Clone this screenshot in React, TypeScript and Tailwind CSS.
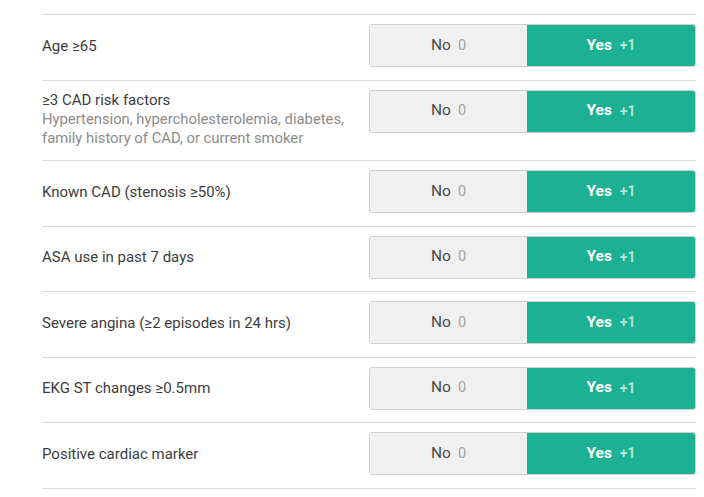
import React from 'react';

type Item = { label: string; sub?: string };

const items: Item[] = [
  { label: 'Age ≥65' },
  {
    label: '≥3 CAD risk factors',
    sub: 'Hypertension, hypercholesterolemia, diabetes, family history of CAD, or current smoker',
  },
  { label: 'Known CAD (stenosis ≥50%)' },
  { label: 'ASA use in past 7 days' },
  { label: 'Severe angina (≥2 episodes in 24 hrs)' },
  { label: 'EKG ST changes ≥0.5mm' },
  { label: 'Positive cardiac marker' },
];

function Toggle() {
  return (
    <div className="flex h-[43px] w-[327px] shrink-0 overflow-hidden rounded-[3px] border border-[#cfcfcf]">
      <button className="flex w-[157px] items-center justify-center gap-[7px] bg-[#f0f0f0] text-[15.5px] text-[#4a4a4a]">
        <span>No</span>
        <span className="text-[14.5px] text-[#a3a3a3]">0</span>
      </button>
      <button className="flex flex-1 items-center justify-center gap-[8px] bg-[#1bb192] text-[15.5px] font-bold text-white">
        <span>Yes</span>
        <span className="text-[14px] font-semibold text-white/70">+1</span>
      </button>
    </div>
  );
}

export default function App() {
  return (
    <div className="min-h-screen bg-white pt-[14px] pl-[42px]" style={{ fontFamily: 'Roboto, "Noto Sans", sans-serif' }}>
      <div className="w-[654px] border-b border-[#dcdcdc]">
        {items.map((item) => (
          <div key={item.label} className="flex items-start justify-between border-t border-[#dcdcdc] pt-[9px] pb-[12.5px]">
            <div className="flex min-h-[43px] w-[312px] flex-col justify-center">
              <span className="text-[15px] leading-[20px] text-[#3d3d3d]">{item.label}</span>
              {item.sub && (
                <span className="text-[14.8px] leading-[19px] text-[#8c8c8c]">{item.sub}</span>
              )}
            </div>
            <Toggle />
          </div>
        ))}
      </div>
    </div>
  );
}
